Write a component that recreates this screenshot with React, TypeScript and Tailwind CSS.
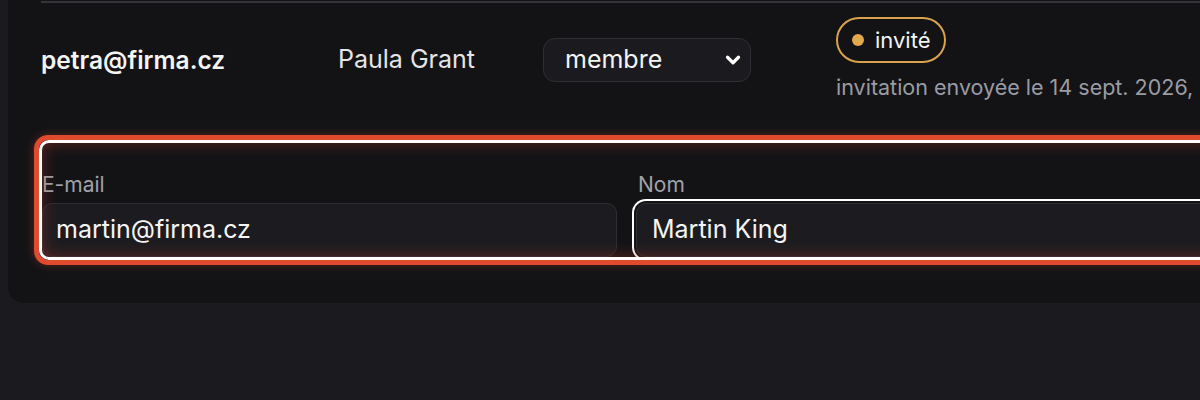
import { ChevronDown } from "lucide-react";

export default function App() {
  return (
    <div
      className="h-[400px] w-[1200px] overflow-hidden bg-[#1b1b1f]"
      style={{ fontFamily: "Inter, 'Noto Sans', sans-serif" }}
    >
      {/* Card (scrolled, only bottom visible) */}
      <div className="ml-2 w-[1400px] rounded-b-2xl bg-[#131316] pl-[33px] pt-px pb-[46px]">
        {/* Member row */}
        <div className="grid grid-cols-[297px_205px_293px_1fr] items-center border-t-2 border-[#34343a] pt-[14px] pb-[15px]">
          <div className="mt-1 text-[24.5px] font-semibold text-[#f4f4f5]">petra@firma.cz</div>
          <div className="mt-1 text-[25px] text-[#e4e4e7]">Paula Grant</div>
          <div className="mt-1">
            <div className="flex h-[44px] w-[208px] items-center justify-between rounded-[12px] border border-[#2e2e34] bg-[#1b1b1f] pl-[21px] pr-[6px] text-[25px] text-[#f4f4f5]">
              <span>membre</span>
              <ChevronDown size={22} strokeWidth={3.5} className="text-white" />
            </div>
          </div>
          <div className="flex w-[360px] flex-col items-start gap-[12px] whitespace-nowrap">
            <span className="flex h-[46px] items-center gap-[11px] rounded-full border-2 border-[#d9a24c] pl-[14px] pr-[13px] text-[22px] text-[#f4f4f5]">
              <span className="h-[12px] w-[12px] rounded-full bg-[#e3a84c]" />
              invité
            </span>
            <span className="text-[21.5px] leading-6 text-[#9b9ba3]">
              invitation envoyée le 14 sept. 2026,
            </span>
          </div>
        </div>

        {/* New invitation form, highlighted */}
        <div className="relative mt-[28px] ml-px w-[1300px] pt-[30px]">
          <div className="grid grid-cols-[575px_1fr] gap-[19px]">
            <label className="flex flex-col gap-[5px]">
              <span className="text-[21px] leading-[26px] text-[#a1a1aa]">E-mail</span>
              <div className="flex h-[54px] items-center rounded-[10px] border border-[#2d2d33] bg-[#1c1c20] px-[13px] text-[25px] text-[#f4f4f5]">
                martin@firma.cz
              </div>
            </label>
            <label className="flex flex-col gap-[5px]">
              <span className="pl-[2px] text-[21px] leading-[26px] text-[#a1a1aa]">Nom</span>
              <div className="flex h-[54px] items-center rounded-[10px] border border-[#2d2d33] bg-[#1c1c20] px-[15px] text-[25px] text-[#f4f4f5] ring-2 ring-white ring-offset-2 ring-offset-[#131316]">
                Martin King
              </div>
            </label>
          </div>

          {/* Highlight overlay */}
          <div className="pointer-events-none absolute -top-[7px] -bottom-[8px] -left-[8px] right-0 rounded-[14px] border-[5px] border-[#e04a2f] shadow-[0_0_10px_rgba(224,74,47,0.35)]">
            <div className="h-full w-full rounded-[10px] border-[3px] border-white shadow-[inset_0_0_16px_rgba(190,60,40,0.45)]" />
          </div>
        </div>
      </div>
    </div>
  );
}
